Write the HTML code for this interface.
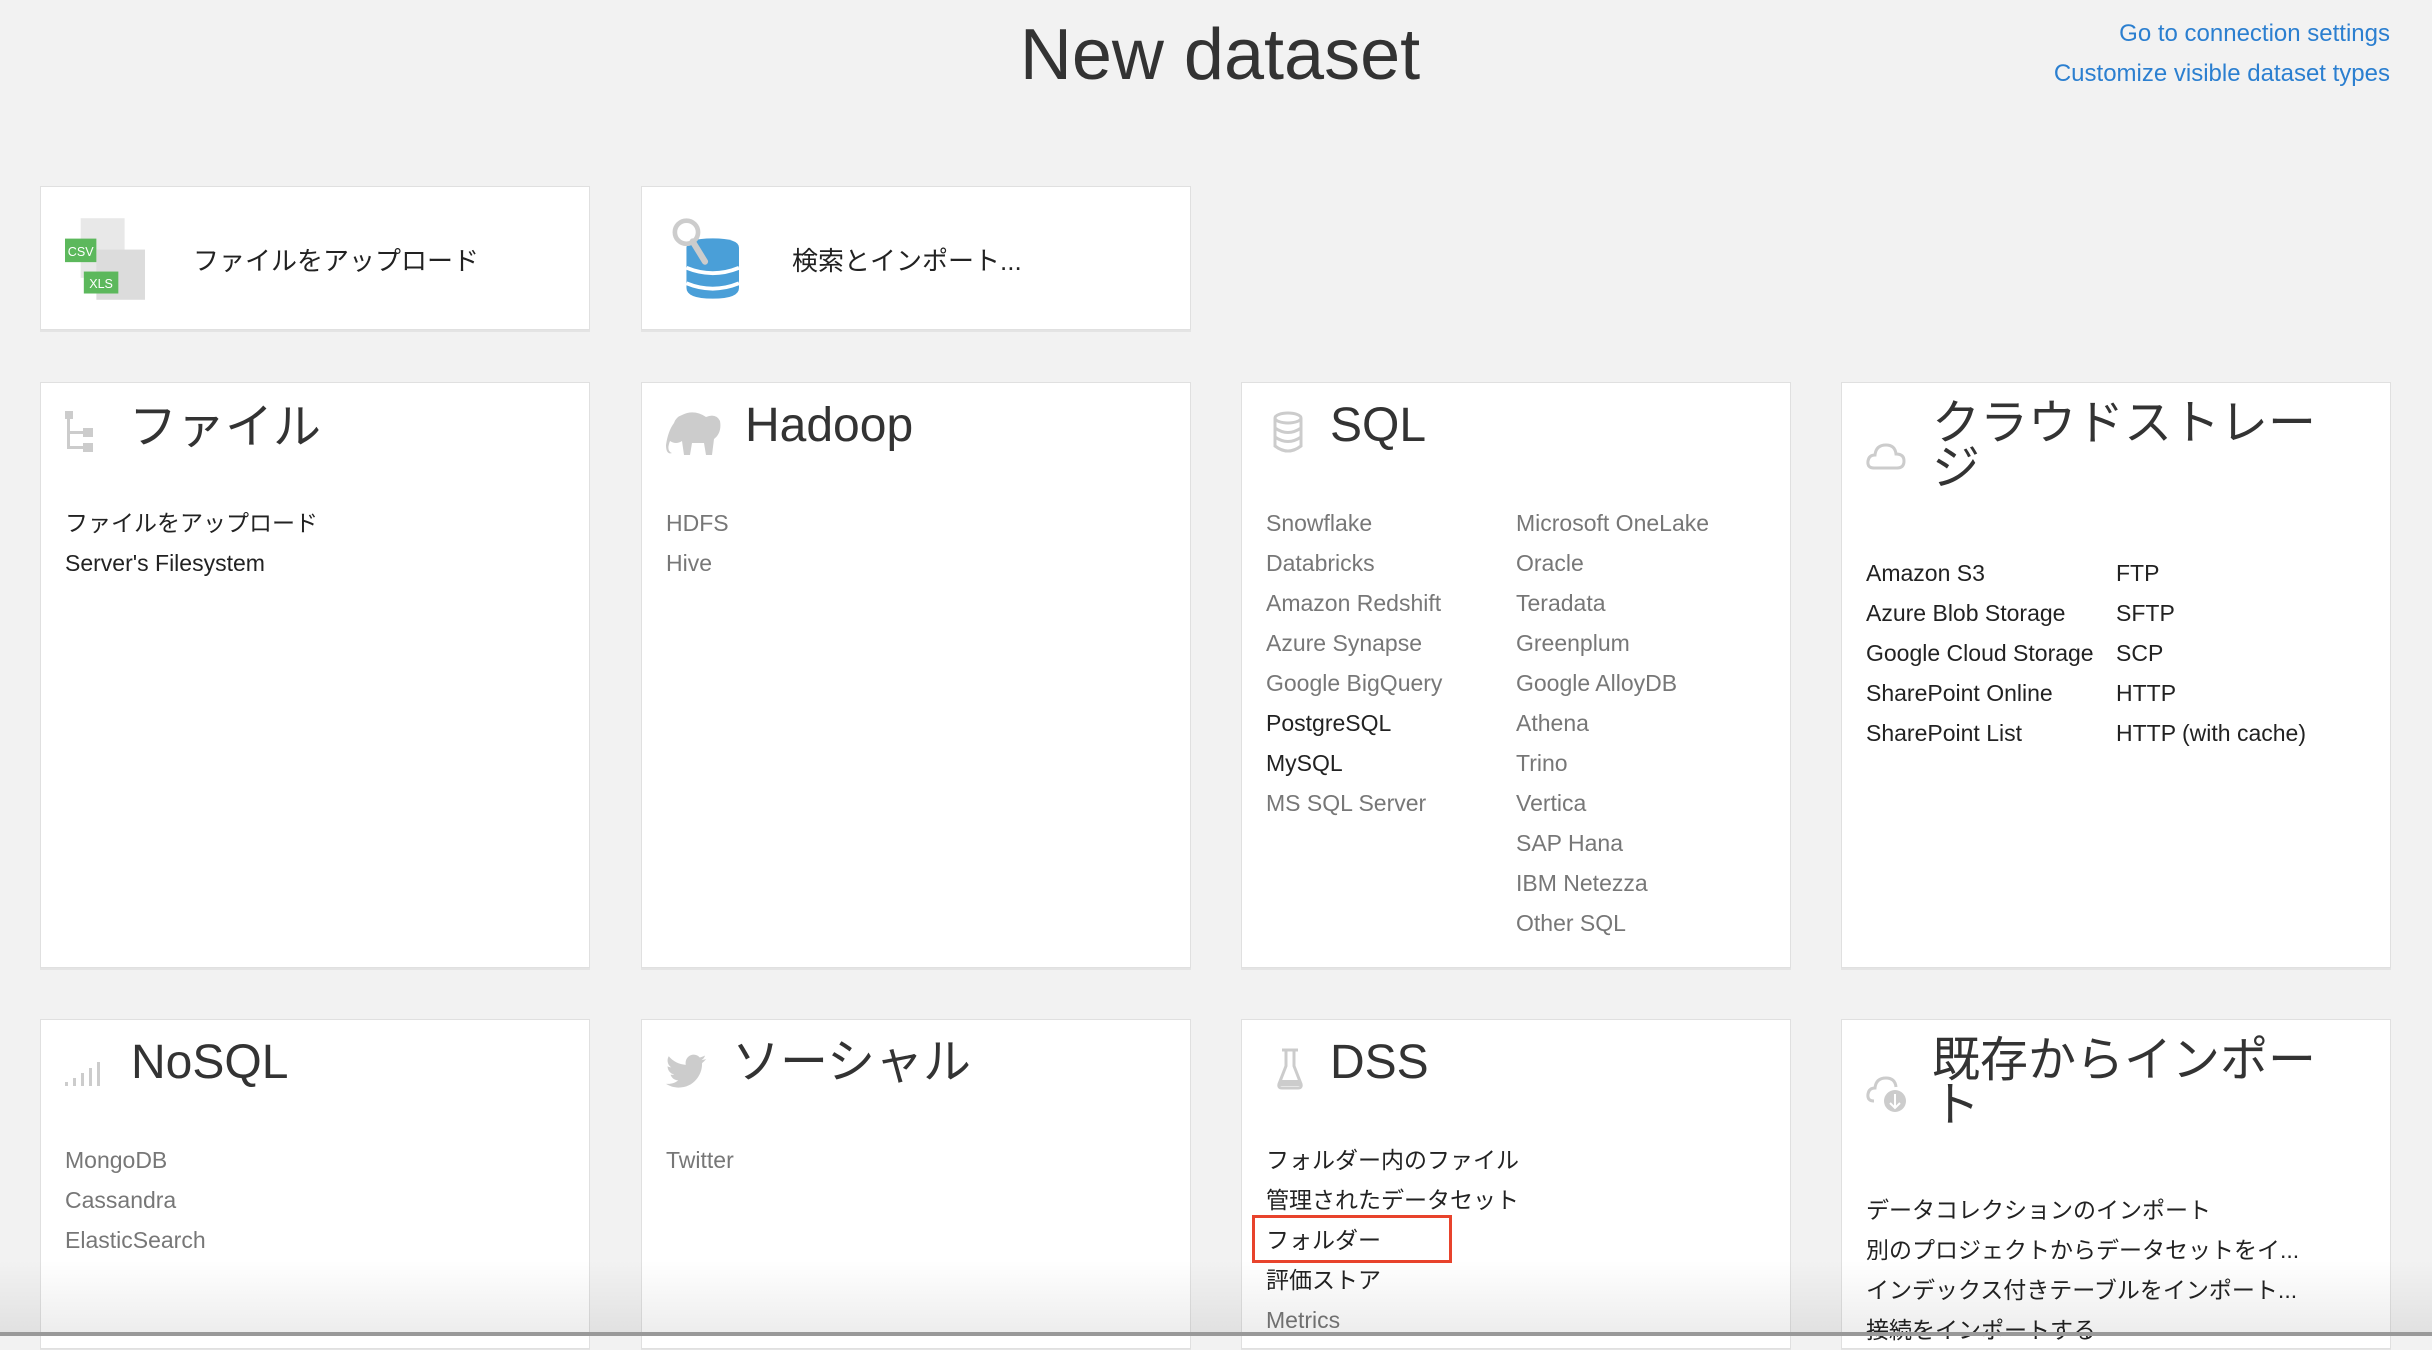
<!DOCTYPE html>
<html><head><meta charset="utf-8">
<style>
*{margin:0;padding:0;box-sizing:border-box}
html,body{width:2432px;height:1336px;overflow:hidden;background:#f2f2f2;font-family:"Liberation Sans","Noto Sans CJK JP",sans-serif;color:#222}
.abs{position:absolute}
h1{position:absolute;left:0;width:2440px;text-align:center;top:14px;font-size:72px;font-weight:normal;color:#333}
.lnk{position:absolute;right:42px;font-size:24px;color:#2b7fd0}
.card{position:absolute;background:#fff;border:1px solid #e0e0e0;box-shadow:0 2px 0 #e4e4e4}
.top{top:186px;height:144px;width:550px}
.top .t{position:absolute;left:152px;top:54px;font-size:26px;color:#222}
.big{top:382px;height:586px;width:550px}
.row2{top:1019px;height:330px;width:550px}
.ttl{position:absolute;left:90px;top:20px;font-size:48px;color:#333;line-height:46px}
.ic{position:absolute;left:24px;top:28px}
ul{list-style:none;position:absolute;font-size:23px;line-height:40px;color:#777}
ul li{white-space:nowrap}
.k{color:#222}
.fade{position:absolute;left:0;top:1260px;width:2432px;height:72px;background:linear-gradient(rgba(0,0,0,0),rgba(0,0,0,0.07))}
</style></head><body>
<h1>New dataset</h1>
<div class="lnk" style="top:20px">Go to connection settings</div>
<div class="lnk" style="top:60px">Customize visible dataset types</div>

<div class="card top" style="left:40px">
 <svg class="abs" style="left:24px;top:31px" width="80" height="82" viewBox="0 0 51 52">
  <rect x="10" y="0" width="28" height="38" fill="#e8e8e8"/>
  <rect x="20" y="20" width="31" height="32" fill="#dcdcdc"/>
  <rect x="0" y="13" width="20" height="15" fill="#5cb85c"/>
  <text x="10" y="24" font-size="8" fill="#fff" text-anchor="middle" font-family="Liberation Sans">CSV</text>
  <rect x="12" y="34" width="22" height="14" fill="#5cb85c"/>
  <text x="23" y="44.5" font-size="8" fill="#fff" text-anchor="middle" font-family="Liberation Sans">XLS</text>
 </svg>
 <div class="t">ファイルをアップロード</div>
</div>
<div class="card top" style="left:641px">
 <svg class="abs" style="left:29px;top:31px" width="68" height="81" viewBox="0 0 44 52">
  <path d="M10 19 L10 45 Q10 52 27 52 Q44 52 44 45 L44 19 Q44 13 27 13 Q10 13 10 19Z" fill="#4a9fd8"/>
  <path d="M10 32 Q27 39 44 32 M10 42 Q27 49 44 42" stroke="#fff" stroke-width="2.5" fill="none"/>
  <circle cx="10" cy="9" r="7.5" fill="#fff" stroke="#ccc" stroke-width="3"/>
  <path d="M14 15 L22 28" stroke="#ccc" stroke-width="4" stroke-linecap="round"/>
 </svg>
 <div class="t" style="left:150px">検索とインポート...</div>
</div>

<div class="card big" style="left:40px">
 <svg class="ic" width="40" height="44" viewBox="0 0 40 44" style="top:28px"><g fill="#ccc"><rect x="0" y="0" width="8" height="8"/><rect x="2" y="8" width="3" height="30"/><rect x="5" y="20" width="14" height="3"/><rect x="5" y="35" width="14" height="3"/><rect x="18" y="17" width="10" height="9"/><rect x="18" y="32" width="10" height="9"/></g></svg>
 <div class="ttl" style="left:88px;top:22px">ファイル</div>
 <ul style="left:24px;top:120px"><li class="k">ファイルをアップロード</li><li class="k">Server's Filesystem</li></ul>
</div>
<div class="card big" style="left:641px">
 <svg class="ic" width="56" height="46" viewBox="0 0 56 46" style="left:24px;top:28px"><path d="M16 4 Q28 -2 40 6 Q50 2 54 10 Q56 22 48 28 L46 44 L40 44 L38 32 L26 32 L24 44 L18 44 L16 30 Q10 34 4 30 Q0 40 6 42 Q0 44 0 34 Q2 20 8 12 Q10 6 16 4Z" fill="#ccc"/></svg>
 <div class="ttl" style="left:103px">Hadoop</div>
 <ul style="left:24px;top:120px"><li>HDFS</li><li>Hive</li></ul>
</div>
<div class="card big" style="left:1241px">
 <svg class="ic" width="32" height="44" viewBox="0 0 32 44" style="left:30px;top:28px"><g fill="none" stroke="#ccc" stroke-width="3"><ellipse cx="16" cy="7" rx="13" ry="5"/><path d="M3 7 V35 Q16 45 29 35 V7 M3 17 Q16 26 29 17 M3 26 Q16 35 29 26"/></g></svg>
 <div class="ttl" style="left:88px">SQL</div>
 <ul style="left:24px;top:120px"><li>Snowflake</li><li>Databricks</li><li>Amazon Redshift</li><li>Azure Synapse</li><li>Google BigQuery</li><li class="k">PostgreSQL</li><li class="k">MySQL</li><li>MS SQL Server</li></ul>
 <ul style="left:274px;top:120px"><li>Microsoft OneLake</li><li>Oracle</li><li>Teradata</li><li>Greenplum</li><li>Google AlloyDB</li><li>Athena</li><li>Trino</li><li>Vertica</li><li>SAP Hana</li><li>IBM Netezza</li><li>Other SQL</li></ul>
</div>
<div class="card big" style="left:1841px">
 <svg class="ic" width="40" height="30" viewBox="0 0 40 30" style="left:24px;top:58px"><path d="M8 27 Q1 27 2 20 Q3 14 9 14 Q10 4 20 4 Q29 4 30 13 Q38 13 38 20 Q38 27 31 27Z" fill="none" stroke="#ccc" stroke-width="3"/></svg>
 <div class="ttl" style="left:90px;top:18px;width:420px;line-height:45px">クラウドストレージ</div>
 <ul style="left:24px;top:170px"><li class="k">Amazon S3</li><li class="k">Azure Blob Storage</li><li class="k">Google Cloud Storage</li><li class="k">SharePoint Online</li><li class="k">SharePoint List</li></ul>
 <ul style="left:274px;top:170px"><li class="k">FTP</li><li class="k">SFTP</li><li class="k">SCP</li><li class="k">HTTP</li><li class="k">HTTP (with cache)</li></ul>
</div>

<div class="card row2" style="left:40px">
 <svg class="ic" width="42" height="30" viewBox="0 0 42 30" style="top:36px"><g fill="#ccc"><rect x="0" y="26" width="3" height="4"/><rect x="8" y="22" width="3" height="8"/><rect x="16" y="17" width="3" height="13"/><rect x="24" y="12" width="3" height="18"/><rect x="32" y="6" width="3" height="24"/></g></svg>
 <div class="ttl" style="left:90px">NoSQL</div>
 <ul style="left:24px;top:120px"><li>MongoDB</li><li>Cassandra</li><li>ElasticSearch</li></ul>
</div>
<div class="card row2" style="left:641px">
 <svg class="ic" width="42" height="36" viewBox="0 0 24 20" style="top:34px"><path d="M23 2.5c-.8.4-1.8.6-2.7.7 1-.6 1.7-1.5 2-2.6-.9.5-1.9.9-3 1.1C18.4.7 17.2.1 15.9.1c-2.6 0-4.7 2.1-4.7 4.7 0 .4 0 .7.1 1.1C7.4 5.7 3.900 3.8 1.6 1 1.2 1.6.9 2.5.9 3.4c0 1.6.8 3.1 2.1 3.9-.8 0-1.5-.2-2.1-.6v.1c0 2.3 1.6 4.2 3.8 4.6-.4.1-.8.2-1.2.2-.3 0-.6 0-.9-.1.6 1.9 2.3 3.2 4.4 3.3-1.6 1.3-3.6 2-5.8 2H0c2.1 1.3 4.6 2.1 7.2 2.1 8.6 0 13.4-7.2 13.4-13.4v-.6c.9-.7 1.7-1.5 2.4-2.4z" fill="#ccc"/></svg>
 <div class="ttl" style="left:90px">ソーシャル</div>
 <ul style="left:24px;top:120px"><li>Twitter</li></ul>
</div>
<div class="card row2" style="left:1241px">
 <svg class="ic" width="30" height="42" viewBox="0 0 30 42" style="left:34px;top:28px"><path d="M6 2 H22 M10 2 V18 L3 36 Q2 40 6 40 H22 Q26 40 25 36 L18 18 V2" fill="none" stroke="#ccc" stroke-width="3"/><path d="M5 32 H23 L25 38 H3Z" fill="#ccc"/></svg>
 <div class="ttl" style="left:88px">DSS</div>
 <ul style="left:24px;top:120px"><li class="k">フォルダー内のファイル</li><li class="k">管理されたデータセット</li><li class="k">フォルダー</li><li class="k">評価ストア</li><li>Metrics</li></ul>
 <div class="abs" style="left:10px;top:195px;width:200px;height:48px;border:3px solid #e8432c"></div>
</div>
<div class="card row2" style="left:1841px">
 <svg class="ic" width="44" height="40" viewBox="0 0 44 40" style="left:24px;top:54px"><path d="M8 27 Q1 27 2 20 Q3 14 9 14 Q10 4 20 4 Q29 4 30 13" fill="none" stroke="#ccc" stroke-width="3"/><circle cx="29" cy="27" r="11" fill="#ccc"/><path d="M29 20 V33 M24 29 L29 34 L34 29" stroke="#fff" stroke-width="2" fill="none"/></svg>
 <div class="ttl" style="left:90px;top:18px;width:430px;line-height:45px">既存からインポート</div>
 <ul style="left:24px;top:170px"><li class="k">データコレクションのインポート</li><li class="k">別のプロジェクトからデータセットをイ...</li><li class="k">インデックス付きテーブルをインポート...</li><li class="k">接続をインポートする</li></ul>
</div>
<div class="fade"></div>
<div class="abs" style="left:0;top:1332px;width:2432px;height:4px;background:#999"></div>
</body></html>
